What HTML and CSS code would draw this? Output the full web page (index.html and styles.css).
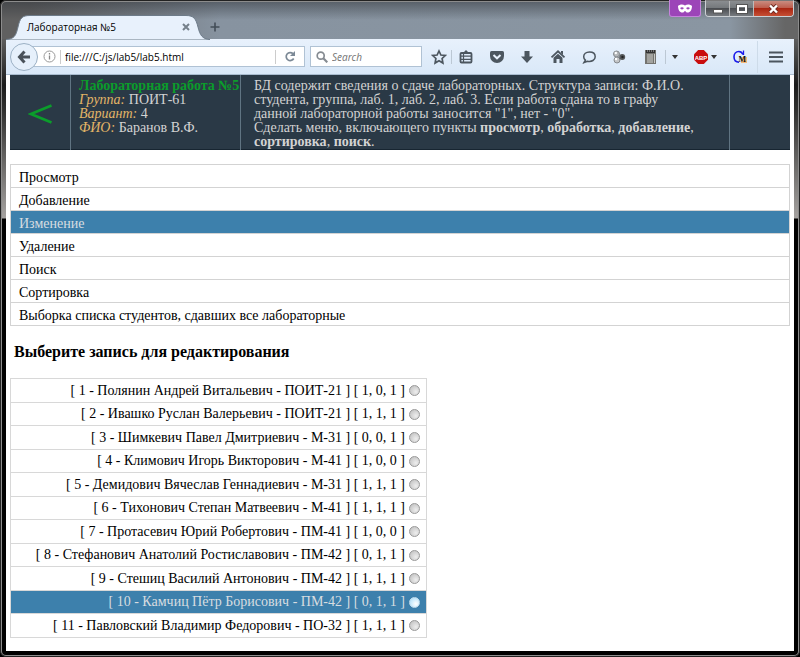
FILE: index.html
```html
<!DOCTYPE html>
<html lang="ru">
<head>
<meta charset="utf-8">
<title>Лабораторная №5</title>
<link rel="stylesheet" href="styles.css">
</head>
<body>
<div class="window">
  <div class="titlebar">
    <div class="tab">
      <svg class="tab-shape" viewBox="0 0 204 25" aria-hidden="true"><path d="M0 24.500C9 24 10 20 12 12C14 3 16 .5 24 .5H180C188 .5 190 4 192 12C194 20 196 24 204 24.500V25H0Z" fill="#e8f1fc" stroke="#6d7b89"/></svg>
      <span class="tab-title">Лабораторная №5</span>
      <button class="tab-close" aria-label="Закрыть вкладку"><svg width="8" height="8" viewBox="0 0 8 8"><path d="M1 1l6 6M7 1l-6 6" stroke="#76818b" stroke-width="2"/></svg></button>
    </div>
    <button class="tab-new" aria-label="Новая вкладка"><svg width="10" height="10" viewBox="0 0 10 10"><path d="M5 .5v9M.5 5h9" stroke="#434d57" stroke-width="1.600"/></svg></button>
    <div class="private" role="img" aria-label="Приватный режим"><svg width="14" height="9" viewBox="0 0 14 9"><path d="M0 2C2 0 5 0 7 1.500C9 0 12 0 14 2C14 6 12 9 9 8.500C8 8.300 7.700 7 7 7C6.300 7 6 8.300 5 8.500C2 9 0 6 0 2Z" fill="#fff"/><ellipse cx="4" cy="4.300" rx="1.700" ry="1.100" fill="#9c45b8"/><ellipse cx="10" cy="4.300" rx="1.700" ry="1.100" fill="#9c45b8"/></svg></div>
    <div class="controls">
      <button class="control" aria-label="Свернуть"><svg width="10" height="10" viewBox="0 0 10 10"><rect x=".5" y="5.500" width="9" height="3.500" fill="#fff" stroke="#555"/></svg></button>
      <button class="control" aria-label="Развернуть"><svg width="12" height="10" viewBox="0 0 12 10"><rect x="2" y="2" width="8" height="6" fill="none" stroke="#fff" stroke-width="2"/><rect x=".5" y=".5" width="11" height="9" fill="none" stroke="#555"/></svg></button>
      <button class="control control-close" aria-label="Закрыть"><svg width="11" height="10" viewBox="0 0 11 10"><path d="M2 1.500l7 7M9 1.500l-7 7" stroke="#6b2a22" stroke-width="4"/><path d="M2 1.500l7 7M9 1.500l-7 7" stroke="#fff" stroke-width="2.400"/></svg></button>
    </div>
  </div>

  <div class="toolbar">
    <button class="back" aria-label="Назад"><svg width="14" height="14" viewBox="0 0 14 14"><path d="M7.500 1.500L2.500 7l5 5.500M3 7h10" fill="none" stroke="#4a525a" stroke-width="3"/></svg></button>
    <div class="address">
      <svg width="13" height="13" viewBox="0 0 13 13" aria-hidden="true"><circle cx="6.500" cy="6.500" r="5.500" fill="none" stroke="#999"/><path d="M6.500 5.500v4M6.500 3v1.500" stroke="#888" stroke-width="1.300"/></svg>
      <input class="address-input" aria-label="Адрес" value="file:///C:/js/lab5/lab5.html">
      <button class="reload" aria-label="Обновить"><svg width="11" height="11" viewBox="0 0 11 11"><path d="M8.700 7.500A4 4 0 1 1 8 2.700" fill="none" stroke="#7c8996" stroke-width="1.700"/><path d="M10 0v5H5Z" fill="#7c8996"/></svg></button>
    </div>
    <div class="search">
      <svg width="12" height="12" viewBox="0 0 12 12" aria-hidden="true"><circle cx="4.700" cy="4.700" r="3.500" fill="none" stroke="#858b91" stroke-width="1.700"/><path d="M7.300 7.300l4 4" stroke="#858b91" stroke-width="2.200"/></svg>
      <input class="search-input" aria-label="Поиск" placeholder="Search">
    </div>
    <button class="icon star" aria-label="Закладка"><svg width="16" height="16" viewBox="0 0 16 16"><path d="M8 2l1.900 4 4.300.5-3.100 3 .8 4.500L8 11.800 4.100 14l.8-4.500-3.100-3L6.100 6Z" fill="none" stroke="#4c565f" stroke-width="1.700"/></svg></button>
    <div class="tools">
      <button class="icon" aria-label="Библиотека"><svg width="16" height="16" viewBox="0 0 16 16"><path d="M5.500 3.500L8 1l2.500 2.500" fill="#4c565f"/><rect x="2.500" y="4" width="11" height="9.500" rx="1" fill="none" stroke="#4c565f" stroke-width="1.800"/><path d="M3 7.200h10M3 10.400h10M5.500 4v9" stroke="#4c565f" stroke-width="1.200"/></svg></button>
      <button class="icon" aria-label="Pocket"><svg width="16" height="16" viewBox="0 0 16 16"><path d="M1 3.500Q1 2 2.500 2h11Q15 2 15 3.500V7A7 7 0 0 1 1 7Z" fill="#4c565f"/><path d="M4.500 6L8 9.300 11.500 6" fill="none" stroke="#e8f1fc" stroke-width="2"/></svg></button>
      <button class="icon" aria-label="Загрузки"><svg width="16" height="16" viewBox="0 0 16 16"><path d="M5.500 2h5v5.500H14L8 14 2 7.500h3.500Z" fill="#4c565f"/></svg></button>
      <button class="icon" aria-label="Домой"><svg width="16" height="16" viewBox="0 0 16 16"><path d="M1.500 8.300L8 2.300l6.500 6" fill="none" stroke="#4c565f" stroke-width="1.800"/><path d="M3.500 8.800L8 4.700l4.500 4.100V14h-3v-4h-3v4h-3ZM11 2h2v4l-2-2Z" fill="#4c565f"/></svg></button>
      <button class="icon" aria-label="Чат"><svg width="16" height="16" viewBox="0 0 16 16"><path d="M8.500 3C5 3 2.700 5 2.700 7.700c0 1.600.7 2.700 1.700 3.500L3 13.500l3.500-1.300c4.300.9 7.700-1.300 7.700-4.500C14.200 5 12 3 8.500 3Z" fill="none" stroke="#4c565f" stroke-width="1.500"/></svg></button>
      <button class="icon" aria-label="Дополнение"><svg width="16" height="16" viewBox="0 0 16 16"><circle cx="5.500" cy="5" r="3" fill="#b5b8ba" stroke="#85898d"/><circle cx="6" cy="11" r="3" fill="#c4c6c8" stroke="#85898d"/><circle cx="11.200" cy="8" r="3" fill="#55585a"/><circle cx="11.500" cy="8" r="1.200" fill="#222"/><circle cx="4.800" cy="4" r="1.200" fill="#fff"/><circle cx="5" cy="10" r="1.200" fill="#fff"/></svg></button>
      <button class="icon" aria-label="Сервер"><svg width="16" height="16" viewBox="0 0 16 16"><rect x="3" y="1" width="11" height="14" fill="#73736f"/><path d="M4 1h9v3H4Z" fill="#333"/><path d="M5 2h7" stroke="#bbb" stroke-dasharray="1 1"/><rect x="5" y="5" width="6" height="9" fill="#a3a39f"/><path d="M12.500 5v9" stroke="#c9c9c5"/></svg></button>
    </div>
    <button class="icon caret" aria-label="Список"><svg width="6" height="4" viewBox="0 0 6 4"><path d="M0 0h6L3 4Z" fill="#333"/></svg></button>
    <button class="icon adblock" aria-label="Adblock Plus"><svg width="14" height="14" viewBox="0 0 14 14"><path d="M4.200 0h5.600L14 4.200v5.600L9.800 14H4.200L0 9.800V4.200Z" fill="#c90d0d"/><text x="7" y="9.500" text-anchor="middle" class="abp-text">ABP</text></svg><svg width="6" height="4" viewBox="0 0 6 4"><path d="M0 0h6L3 4Z" fill="#333"/></svg></button>
    <button class="icon gm" aria-label="Переводчик"><svg width="16" height="16" viewBox="0 0 16 16"><rect x="9" y="8" width="6" height="6" fill="#f5b877"/><path d="M11 5.500C10 3.300 8.500 2.500 6.800 2.500C4 2.500 2 4.700 2 7.800C2 11 4 13.200 7 13.200" fill="none" stroke="#1a1aea" stroke-width="1.600"/><path d="M11.500 1.500v4.500" stroke="#1a1aea" stroke-width="1.300"/><text x="6.500" y="13" class="gm-text">M</text></svg></button>
    <button class="icon menu-button" aria-label="Меню"><svg width="14" height="12" viewBox="0 0 14 12"><path d="M0 1.500h14M0 6h14M0 10.500h14" stroke="#4c565f" stroke-width="2"/></svg></button>
  </div>

  <div class="page">
    <header class="lab">
      <a class="lab-back" href="#" aria-label="Назад к списку"><svg width="24" height="20" viewBox="0 0 24 20"><path d="M23.500 1.500L3 10l20.500 8.500" fill="none" stroke="#0b9d2b" stroke-width="2.600"/></svg></a>
      <div class="lab-info">
        <b class="lab-name">Лабораторная работа №5</b><br>
        <i>Группа:</i> ПОИТ-61<br>
        <i>Вариант:</i> 4<br>
        <i>ФИО:</i> Баранов В.Ф.
      </div>
      <div class="lab-task">
        БД содержит сведения о сдаче лабораторных. Структура записи: Ф.И.О.<br>
        студента, группа, лаб. 1, лаб. 2, лаб. 3. Если работа сдана то в графу<br>
        данной лабораторной работы заносится "1", нет - "0".<br>
        Сделать меню, включающего пункты <b>просмотр</b>, <b>обработка</b>, <b>добавление</b>,<br>
        <b>сортировка</b>, <b>поиск</b>.
      </div>
      <div class="lab-end"></div>
    </header>
    <nav class="menu">
      <a href="#">Просмотр</a>
      <a href="#">Добавление</a>
      <a href="#" class="active">Изменение</a>
      <a href="#">Удаление</a>
      <a href="#">Поиск</a>
      <a href="#">Сортировка</a>
      <a href="#">Выборка списка студентов, сдавших все лабораторные</a>
    </nav>
    <h3>Выберите запись для редактирования</h3>
    <form class="records">
      <label><span>[ 1 - Полянин Андрей Витальевич - ПОИТ-21 ] [ 1, 0, 1 ]</span><input type="radio" name="record"></label>
      <label><span>[ 2 - Ивашко Руслан Валерьевич - ПОИТ-21 ] [ 1, 1, 1 ]</span><input type="radio" name="record"></label>
      <label><span>[ 3 - Шимкевич Павел Дмитриевич - М-31 ] [ 0, 0, 1 ]</span><input type="radio" name="record"></label>
      <label><span>[ 4 - Климович Игорь Викторович - М-41 ] [ 1, 0, 0 ]</span><input type="radio" name="record"></label>
      <label><span>[ 5 - Демидович Вячеслав Геннадиевич - М-31 ] [ 1, 1, 1 ]</span><input type="radio" name="record"></label>
      <label><span>[ 6 - Тихонович Степан Матвеевич - М-41 ] [ 1, 1, 1 ]</span><input type="radio" name="record"></label>
      <label><span>[ 7 - Протасевич Юрий Робертович - ПМ-41 ] [ 1, 0, 0 ]</span><input type="radio" name="record"></label>
      <label><span>[ 8 - Стефанович Анатолий Ростиславович - ПМ-42 ] [ 0, 1, 1 ]</span><input type="radio" name="record"></label>
      <label><span>[ 9 - Стешиц Василий Антонович - ПМ-42 ] [ 1, 1, 1 ]</span><input type="radio" name="record"></label>
      <label class="active"><span>[ 10 - Камчиц Пётр Борисович - ПМ-42 ] [ 0, 1, 1 ]</span><input type="radio" name="record"></label>
      <label><span>[ 11 - Павловский Владимир Федорович - ПО-32 ] [ 1, 1, 1 ]</span><input type="radio" name="record"></label>
    </form>
  </div>
</div>
</body>
</html>
```
FILE: styles.css
```css
* { box-sizing: border-box; }
body { margin: 0; background: #000; }
button { border: 0; padding: 0; background: none; }
svg { display: block; flex: none; }

.window {
  display: flex;
  flex-direction: column;
  min-height: 100vh;
  padding: 0 6px 6px;
  border-radius: 6px;
  background:
    linear-gradient(rgba(50, 54, 60, .6) 0, rgba(50, 54, 60, 0) 20px) 0 0 / 100% 39px no-repeat,
    linear-gradient(90deg, #606060 30px, #8793a0 220px, #8a96a2 calc(100% - 70px), #666 calc(100% - 15px)) 0 0 / 100% 39px no-repeat,
    linear-gradient(#5d5d5d 39px, #1c1c1c 85px, #30302f 110px, #a5a2a0 218px, #000 219px);
  box-shadow: inset 0 0 0 1px #222, inset 0 0 0 2px #8c8c8c;
}

.titlebar {
  display: flex;
  align-items: flex-start;
  height: 39px;
}
.tab {
  position: relative;
  display: flex;
  align-items: center;
  gap: 8px;
  width: 204px;
  height: 24px;
  margin-top: 15px;
  padding: 0 20px 0 21px;
  font: 10px/24px "Open Sans", sans-serif;
}
.tab-shape { position: absolute; left: 0; top: 0; width: 204px; height: 25px; }
.tab-title { position: relative; flex: 1; white-space: nowrap; }
.tab-close { position: relative; }
.tab-new { margin-top: 22px; }
.private {
  display: grid;
  place-items: center;
  width: 32px;
  height: 17px;
  margin-left: auto;
  background: #9c45b8;
  border: 1px solid #c583dc;
  border-top: 0;
  border-radius: 0 0 3px 3px;
}
.controls {
  display: flex;
  height: 17px;
  margin-left: 4px;
  border: 1px solid #ccd0d4;
  border-top-color: #777;
  border-radius: 0 0 4px 4px;
  overflow: hidden;
}
.control {
  display: grid;
  place-items: center;
  width: 24px;
  background: linear-gradient(#8a8d90, #73777a 50%, #4b4e52 50%, #777b80);
  border-right: 1px solid #bbb;
}
.control-close {
  width: 39px;
  background: linear-gradient(#c98c80, #bc5847 50%, #a92612 50%, #c64f34);
  border: 0;
}

.toolbar {
  display: flex;
  align-items: center;
  height: 36px;
  padding-left: 4px;
  background: linear-gradient(#e8f1fc, #d9e8f8);
  border-bottom: 1px solid #a9bccf;
}
.back {
  display: grid;
  place-items: center;
  z-index: 1;
  width: 28px;
  height: 28px;
  margin-right: -6px;
  background: #e6f0fb;
  border: 1px solid #9bb0c4;
  border-radius: 50%;
}
.address, .search {
  display: flex;
  align-items: center;
  height: 21px;
  background: #fff;
  border: 1px solid #b0c2d4;
}
.address { flex: 1; min-width: 0; padding-left: 10px; }
.address-input, .search-input {
  min-width: 0;
  flex: 1;
  height: 14px;
  padding: 0;
  border: 0;
  outline: 0;
  background: none;
  font: 10px/14px "Open Sans", sans-serif;
  color: #000;
}
.address-input { margin-left: 4px; padding-left: 4px; border-left: 1px solid #ccc; }
.reload {
  display: grid;
  place-items: center;
  width: 29px;
  height: 14px;
  border-left: 1px solid #ccc;
}
.search { width: 112px; margin: 0 4px 0 5px; padding-left: 5px; gap: 4px; }
.search-input::placeholder { color: #737373; font-style: italic; }
.icon { display: flex; align-items: center; justify-content: center; flex: none; }
.star { width: 26px; height: 14px; border-right: 1px solid #bcc8d4; }
.tools {
  display: flex;
  justify-content: space-between;
  flex: none;
  width: 200px;
  margin-left: 6px;
}
.caret { width: 18px; height: 14px; margin-left: 7px; border-left: 1px solid #bcc8d4; }
.adblock { gap: 3px; margin-left: 11px; }
.abp-text { font: bold 6px "Liberation Sans", sans-serif; fill: #fff; }
.gm { margin: 0 9px 0 15px; }
.gm-text { font: bold 8px "Liberation Serif", serif; fill: #111; }
.menu-button { width: 37px; height: 32px; border-left: 1px solid #cddbe9; }

.page {
  flex: 1;
  padding: 0 4px 12px;
  background: #fff;
  font: 14px/22px "Liberation Serif", serif;
  color: #000;
}
.lab {
  display: flex;
  background: #2a3946;
  box-shadow: inset 0 -1px #172531;
  color: #d3d3d3;
  line-height: 14px;
}
.lab-back {
  display: grid;
  place-items: center;
  width: 60px;
  padding-top: 3px;
}
.lab-info, .lab-task { padding-top: 4px; padding-bottom: 1px; white-space: nowrap; }
.lab-info { width: 170px; padding-left: 8px; border-left: 1px solid #607482; }
.lab-info i { color: #e2b566; }
.lab-name { color: #0b9d2b; }
.lab-task { flex: 1; padding-left: 13px; border-left: 1px solid #607482; }
.lab-end { width: 61px; border-left: 1px solid #607482; }

.menu { margin-top: 14px; border: 1px solid #d3d3d3; border-bottom: 0; }
.menu a {
  display: block;
  height: 23px;
  padding: 3px 8px 0;
  border-bottom: 1px solid #d3d3d3;
  color: #000;
  line-height: 20px;
  text-decoration: none;
}
.menu .active, .records .active { background: #3d80ac; color: #d8dde0; }
h3 { margin: 15px 4px; font-size: 16px; line-height: 22px; }

.records {
  width: 417px;
  max-width: 100%;
  border: 1px solid #d8d8d8;
  border-bottom: 0;
}
.records label {
  display: flex;
  align-items: center;
  justify-content: flex-end;
  gap: 4px;
  height: 24px;
  padding-right: 6px;
  border-bottom: 1px solid #d8d8d8;
  white-space: nowrap;
}
.records label:nth-child(even) { height: 23px; }
.records input {
  appearance: none;
  width: 11px;
  height: 11px;
  margin: 0;
  border: 1px solid #999;
  border-radius: 50%;
  background: radial-gradient(circle at 65% 65%, #eee, #bbb);
}
.records .active input { border-color: #c3dcec; background: radial-gradient(circle at 65% 65%, #fff, #a5dcfa); }
```
